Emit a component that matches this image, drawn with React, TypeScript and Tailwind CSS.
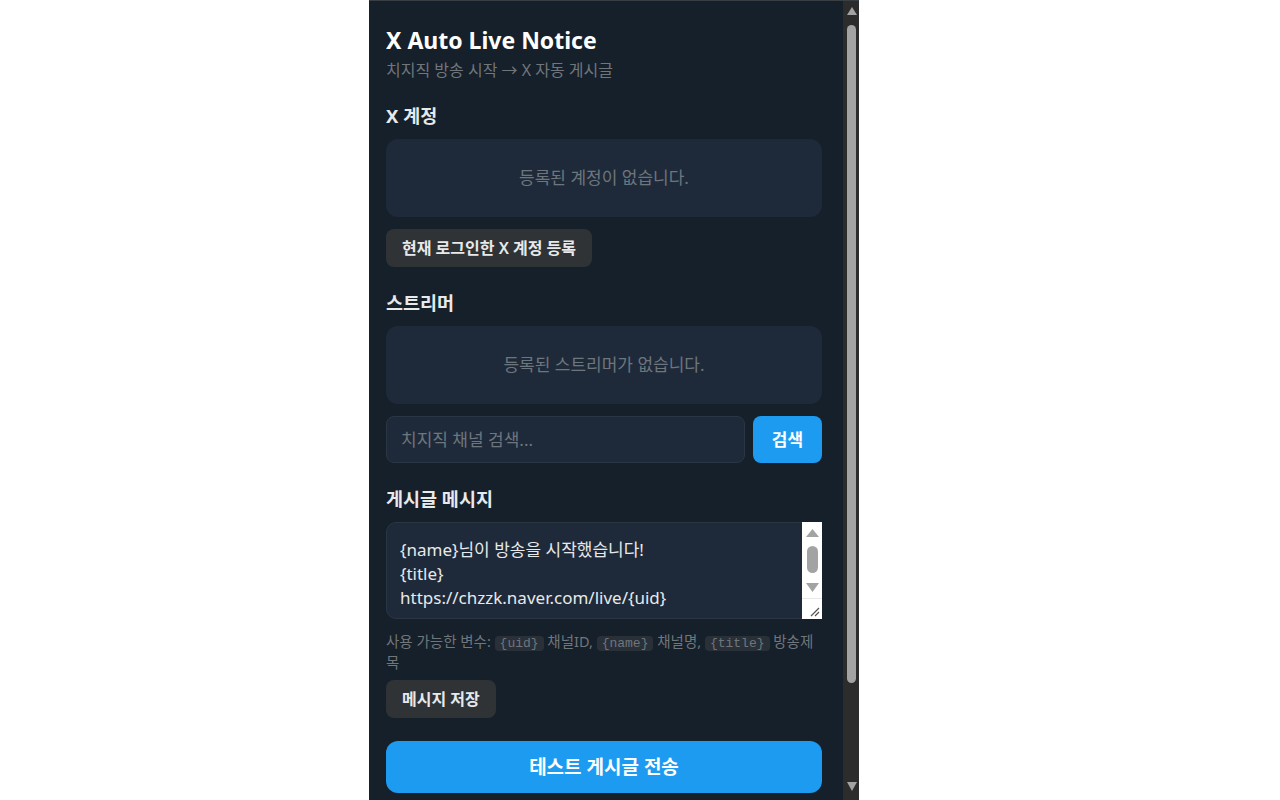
import { useState } from 'react';

const font = { fontFamily: '"Noto Sans", "Noto Sans CJK KR", sans-serif' };

function SectionTitle({ children }: { children: React.ReactNode }) {
  return <h2 className="text-[18.5px] leading-6 font-bold text-[#e7e9ea] mb-[11px]">{children}</h2>;
}

function EmptyBox({ text }: { text: string }) {
  return (
    <div className="h-[78px] rounded-xl bg-[#1e2a3a] flex items-center justify-center text-[17px] text-[#6e767d]">
      {text}
    </div>
  );
}

function Chip({ children }: { children: React.ReactNode }) {
  return (
    <code className="px-[5px] rounded bg-[#2a3038] text-[13px] leading-4 text-[#6e767d]" style={{ fontFamily: '"Liberation Mono", monospace' }}>
      {children}
    </code>
  );
}

function Arrow({ up, className }: { up?: boolean; className: string }) {
  return (
    <svg viewBox="0 0 10 8" preserveAspectRatio="none" className={className}>
      <path d={up ? 'M5 0 L10 8 L0 8 Z' : 'M0 0 L10 0 L5 8 Z'} fill="currentColor" />
    </svg>
  );
}

function PanelScrollbar() {
  return (
    <div className="w-4 shrink-0 bg-[#2c2c2c] flex flex-col text-[#a3a3a3]">
      <Arrow up className="mt-[6px] ml-[4px] w-[10px] h-[8px]" />
      <div className="mt-[10px] ml-[4px] w-[9px] h-[658px] rounded-full bg-[#a3a3a3]" />
      <Arrow className="mt-[99px] ml-[4px] w-[10px] h-[9px]" />
    </div>
  );
}

function TextareaScrollbar() {
  return (
    <div className="absolute top-0 right-0 bottom-0 w-5 bg-white flex flex-col items-center text-[#a3a3a3]">
      <Arrow up className="mt-[7px] w-[13px] h-[8px]" />
      <div className="mt-[9px] w-[11px] h-[27px] rounded-full bg-[#a3a3a3]" />
      <Arrow className="mt-[10px] w-[13px] h-[9px]" />
      <div className="mt-[6px] flex-1 w-full border-t border-[#e8e8e8] flex items-end justify-end p-[2px]">
        <svg viewBox="0 0 10 10" className="w-[10px] h-[10px]">
          <path d="M1 9 L9 1 M5 9 L9 5" stroke="#555" strokeWidth="1.2" />
        </svg>
      </div>
    </div>
  );
}

export default function App() {
  const [query, setQuery] = useState('');
  const [message, setMessage] = useState('{name}님이 방송을 시작했습니다!\n{title}\nhttps://chzzk.naver.com/live/{uid}');

  return (
    <div className="min-h-screen bg-white" style={font}>
      <div className="ml-[369px] w-[490px] h-[800px] flex bg-[#15202b] border-t border-[#3a3f44] overflow-hidden">
        <div className="flex-1 pl-[17px] pt-[23px]">
          <div className="w-[436px]">
            <h1 className="text-[23px] leading-8 font-bold text-white">X Auto Live Notice</h1>
            <p className="mt-1 text-base leading-5 text-[#71767b]">치지직 방송 시작 → X 자동 게시글</p>

            <section className="mt-6">
              <SectionTitle>X 계정</SectionTitle>
              <EmptyBox text="등록된 계정이 없습니다." />
              <button className="mt-3 h-[38px] px-4 rounded-lg bg-[#2f3336] text-base font-semibold text-[#e7e9ea]">
                현재 로그인한 X 계정 등록
              </button>
            </section>

            <section className="mt-6">
              <SectionTitle>스트리머</SectionTitle>
              <EmptyBox text="등록된 스트리머가 없습니다." />
              <div className="mt-3 flex gap-2">
                <input
                  value={query}
                  onChange={e => setQuery(e.target.value)}
                  placeholder="치지직 채널 검색..."
                  className="flex-1 h-[47px] px-[14px] rounded-lg bg-[#1e2a3a] border border-[#2a3644] text-[17px] text-[#e7e9ea] placeholder:text-[#6e767d] outline-none"
                />
                <button className="w-[69px] h-[47px] rounded-lg bg-[#1d9bf0] text-[17px] font-bold text-white">검색</button>
              </div>
            </section>

            <section className="mt-6">
              <SectionTitle>게시글 메시지</SectionTitle>
              <div className="relative h-[97px]">
                <textarea
                  value={message}
                  onChange={e => setMessage(e.target.value)}
                  className="block w-full h-full resize-none overflow-hidden pt-[15px] pb-[12px] pl-[13px] pr-6 rounded-[10px] bg-[#1e2a3a] border border-[#2a3644] text-[17px] leading-6 text-[#e7e9ea] outline-none"
                />
                <TextareaScrollbar />
              </div>
              <p className="mt-3 text-[14.5px] leading-5 text-[#71767b]">
                사용 가능한 변수: <Chip>{'{uid}'}</Chip> 채널ID, <Chip>{'{name}'}</Chip> 채널명, <Chip>{'{title}'}</Chip> 방송제목
              </p>
              <button className="mt-2 h-[38px] px-4 rounded-lg bg-[#2f3336] text-base font-semibold text-[#e7e9ea]">
                메시지 저장
              </button>
            </section>

            <button className="mt-[23px] w-full h-[52px] rounded-xl bg-[#1d9bf0] text-[19px] font-bold text-white">
              테스트 게시글 전송
            </button>
          </div>
        </div>
        <PanelScrollbar />
      </div>
    </div>
  );
}
